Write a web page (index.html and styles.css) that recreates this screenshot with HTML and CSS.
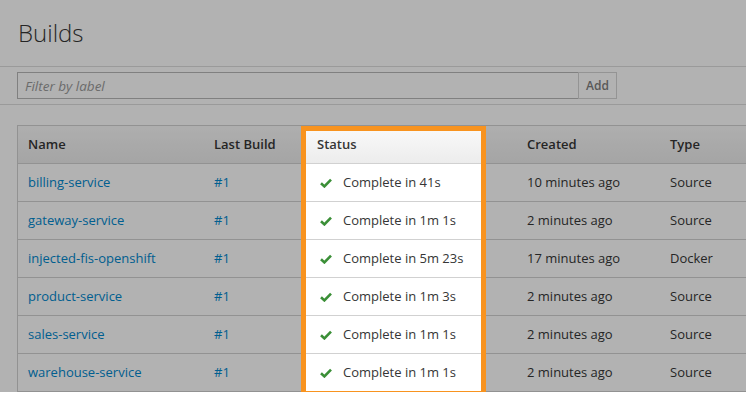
FILE: index.html
```html
<!DOCTYPE html>
<html lang="en">
<head>
<meta charset="utf-8">
<title>Builds</title>
<link rel="stylesheet" href="styles.css">
</head>
<body>
<div class="page">
  <header class="page-header">
    <h1 class="page-title">Builds</h1>
  </header>
  <div class="toolbar">
    <div class="filter">
      <input class="filter-input" type="text" placeholder="Filter by label">
      <button class="filter-add" type="button">Add</button>
    </div>
  </div>
  <div class="table-wrap">
    <table class="builds">
      <colgroup>
        <col class="c-name"><col class="c-last"><col class="c-status"><col class="c-created"><col class="c-type">
      </colgroup>
      <thead>
        <tr><th>Name</th><th>Last Build</th><th>Status</th><th>Created</th><th>Type</th></tr>
      </thead>
      <tbody>
        <tr><td><a href="#">billing-service</a></td><td><a href="#">#1</a></td><td><svg viewBox="0 0 12 10" class="check"><path d="M1 5.2 L4.4 8.4 L11 1.6"/></svg>Complete in 41s</td><td>10 minutes ago</td><td>Source</td></tr>
        <tr><td><a href="#">gateway-service</a></td><td><a href="#">#1</a></td><td><svg viewBox="0 0 12 10" class="check"><path d="M1 5.2 L4.4 8.4 L11 1.6"/></svg>Complete in 1m 1s</td><td>2 minutes ago</td><td>Source</td></tr>
        <tr><td><a href="#">injected-fis-openshift</a></td><td><a href="#">#1</a></td><td><svg viewBox="0 0 12 10" class="check"><path d="M1 5.2 L4.4 8.4 L11 1.6"/></svg>Complete in 5m 23s</td><td>17 minutes ago</td><td>Docker</td></tr>
        <tr><td><a href="#">product-service</a></td><td><a href="#">#1</a></td><td><svg viewBox="0 0 12 10" class="check"><path d="M1 5.2 L4.4 8.4 L11 1.6"/></svg>Complete in 1m 3s</td><td>2 minutes ago</td><td>Source</td></tr>
        <tr><td><a href="#">sales-service</a></td><td><a href="#">#1</a></td><td><svg viewBox="0 0 12 10" class="check"><path d="M1 5.2 L4.4 8.4 L11 1.6"/></svg>Complete in 1m 1s</td><td>2 minutes ago</td><td>Source</td></tr>
        <tr><td><a href="#">warehouse-service</a></td><td><a href="#">#1</a></td><td><svg viewBox="0 0 12 10" class="check"><path d="M1 5.2 L4.4 8.4 L11 1.6"/></svg>Complete in 1m 1s</td><td>2 minutes ago</td><td>Source</td></tr>
      </tbody>
    </table>
    <div class="spotlight"></div>
  </div>
</div>
</body>
</html>
```
FILE: styles.css
```css
html, body {
  margin: 0;
  padding: 0;
  overflow: hidden;
  background: #ffffff;
}
body {
  font-family: "Open Sans", "DejaVu Sans", sans-serif;
  color: #363636;
  font-size: 13px;
}
.page-header {
  padding: 20px 18px 20px;
  border-bottom: 1px solid #dddddd;
}
.page-title {
  margin: 0;
  font-size: 24px;
  font-weight: 300;
  line-height: 26px;
  color: #363636;
}
.toolbar {
  padding: 5px 17px;
  border-bottom: 1px solid #dddddd;
}
.filter {
  display: flex;
  height: 27px;
}
.filter-input {
  box-sizing: border-box;
  width: 562px;
  height: 27px;
  margin: 0;
  padding: 0 7px;
  border: 1px solid #b8b8b8;
  font-family: "Open Sans", sans-serif;
  font-size: 13.5px;
  color: #363636;
  background: #fff;
  outline: none;
}
.filter-input::placeholder {
  color: #9a9a9a;
  font-style: italic;
}
.filter-add {
  box-sizing: border-box;
  width: 39px;
  height: 27px;
  margin: 0 0 0 -1px;
  padding: 0;
  border: 1px solid #d4d4d4;
  background: #fff;
  font-family: "Open Sans", sans-serif;
  font-size: 12px;
  font-weight: 600;
  color: #7f7f7f;
}
.table-wrap {
  position: relative;
  margin: 20px 0 0 17px;
  width: 762px;
  border: 1px solid #d1d1d1;
  border-right: none;
}
.builds {
  table-layout: fixed;
  width: 761px;
  border-collapse: collapse;
}
.c-name { width: 186px; }
.c-last { width: 103px; }
.c-status { width: 210px; }
.c-created { width: 143px; }
.c-type { width: 119px; }
.builds th,
.builds td {
  padding: 0 10px 1px;
  height: 36px;
  line-height: 18px;
  text-align: left;
  vertical-align: middle;
  white-space: nowrap;
  font-size: 13px;
}
.builds thead tr {
  background: linear-gradient(#fafafa, #ececec);
}
.builds th {
  font-weight: 600;
}
.builds td {
  border-top: 1px solid #d1d1d1;
}
.builds a {
  color: #0088ce;
  text-decoration: none;
}
.check {
  display: inline-block;
  width: 12px;
  height: 10px;
  margin: 0 11px 0 3px;
  vertical-align: -1px;
  fill: none;
  stroke: #3b8f37;
  stroke-width: 2.6;
}
.spotlight {
  position: absolute;
  left: 283px;
  top: 0;
  width: 185px;
  height: 270px;
  box-sizing: border-box;
  border: 5px solid #f8931f;
  box-shadow: 0 0 0 3000px rgba(0, 0, 0, 0.3);
  pointer-events: none;
  z-index: 10;
}
```
